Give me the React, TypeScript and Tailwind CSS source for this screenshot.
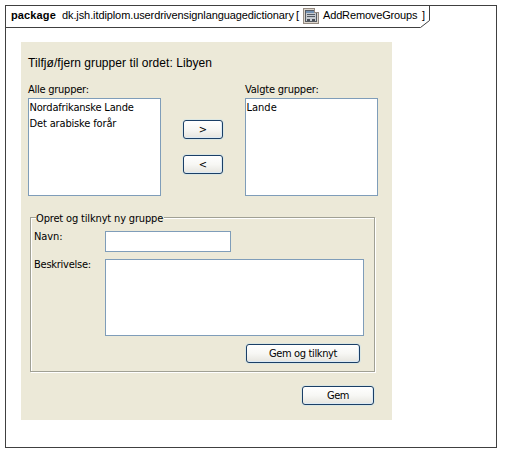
import type { ReactNode } from "react";

function XpButton({ className, children }: { className: string; children: ReactNode }) {
  return (
    <button
      type="button"
      className={`flex h-[19px] items-center justify-center rounded-[3px] border border-[#1b3f66] bg-linear-to-b from-white via-[#f7f7f4] to-[#e6e5df] leading-none shadow-[0_0_0_1px_#dbe6e2,inset_-1px_-1px_0_#dceaf5] ${className}`}
    >
      {children}
    </button>
  );
}

function FormIcon() {
  return (
    <svg width="16" height="16" viewBox="0 0 16 16" shapeRendering="crispEdges" className="block shrink-0">
      <path d="M0 0h12v1h1v1h1v1h1v1h1v12H0z" fill="#958b82" />
      <path d="M1 1h10v4h4v10H1z" fill="#ddd6cc" />
      <path d="M12 1h1v1h1v1h1v1h-3z" fill="#fff" />
      <path d="M2 2h9v3h3v9H2z" fill="#555b63" />
      <path d="M3 3h8v2H3z" fill="#7391b3" />
      <path d="M3 5h10v8H3z" fill="#c6cbd0" />
      <path d="M4 6h8v1H4zM4 8h8v1H4z" fill="#555b63" />
      <path d="M4 11h3v2H4zM9 11h3v2H9z" fill="#4a5058" />
    </svg>
  );
}

export default function App() {
  return (
    <div className="h-[462px] w-[511px] bg-white pt-[5px] pl-[5px] text-black">
      <div className="h-[443px] w-[492px] border border-[#404040]">
        <header className="relative -mt-px -ml-px h-[23px] w-[425px]">
          <svg width="425" height="23" className="absolute inset-0">
            <path d="M0 .5H424.5V15.5L415.5 22.5H0" fill="none" stroke="#404040" />
          </svg>
          <div className="relative flex h-[22px] items-center pl-[6px] font-['Liberation_Sans',Arial,sans-serif] text-[11px] leading-[13px] whitespace-pre">
            <span className="-mt-[2px] w-[51px] font-bold tracking-[0.12px]">package</span>
            <span className="-mt-[2px] w-[234px] tracking-[-0.1px]">dk.jsh.itdiplom.userdrivensignlanguagedictionary</span>
            <span className="-mt-[2px] w-[7px]">[</span>
            <FormIcon />
            <span className="-mt-[2px] ml-[4px] w-[99px] tracking-[-0.15px]">AddRemoveGroups</span>
            <span className="-mt-[2px]">]</span>
          </div>
        </header>

        <main className="mt-[14px] ml-[15px] h-[378px] w-[371px] bg-[#ece9d8] pt-[13px] pl-[7px] font-['DejaVu_Sans_Condensed','DejaVu_Sans',Tahoma,sans-serif] text-[11px] leading-[13px] whitespace-nowrap">
          <h1 className="h-4 font-['Liberation_Sans',Arial,sans-serif] text-[12px] leading-4 tracking-[0.06px]">
            Tilfjø/fjern grupper til ordet: Libyen
          </h1>
          <section className="mt-[12px] flex">
            <div className="w-[133px]">
              <div className="h-[15px] tracking-[-0.25px]">Alle grupper:</div>
              <ul className="h-[98px] border border-[#7f9db9] bg-white pt-px pl-[0.5px] leading-4">
                <li className="tracking-[-0.18px]">Nordafrikanske Lande</li>
                <li className="tracking-[-0.15px]">Det arabiske forår</li>
              </ul>
            </div>
            <div className="mt-[37px] ml-[22px] flex flex-col gap-4">
              <XpButton className="w-10">&gt;</XpButton>
              <XpButton className="w-10">&lt;</XpButton>
            </div>
            <div className="ml-[22px] w-[133px]">
              <div className="h-[15px] tracking-[-0.2px]">Valgte grupper:</div>
              <ul className="h-[98px] border border-[#7f9db9] bg-white pt-px pl-[0.5px] leading-4">
                <li>Lande</li>
              </ul>
            </div>
          </section>

          <section className="mt-[21px] ml-[2px] h-[155px] w-[345px] border border-[#a0a094] shadow-[1px_1px_0_#fff,inset_1px_1px_0_#fff]">
            <div className="-mt-[6px] ml-[5px] h-[13px] w-[128px] bg-[#ece9d8] tracking-[-0.16px]">
              Opret og tilknyt ny gruppe
            </div>
            <div className="mt-[6px] ml-[3px] flex">
              <label className="-mt-px w-[71px] tracking-[-0.1px]">Navn:</label>
              <input className="h-[21px] w-[126px] border border-[#7f9db9] bg-white" />
            </div>
            <div className="mt-[7px] ml-[3px] flex">
              <label className="-mt-px w-[71px] tracking-[-0.25px]">Beskrivelse:</label>
              <textarea className="block h-[77px] w-[259px] resize-none border border-[#7f9db9] bg-white" />
            </div>
            <XpButton className="mt-[8px] ml-[215px] w-[114px] tracking-[-0.35px]">Gem og tilknyt</XpButton>
          </section>
          <XpButton className="mt-[14px] ml-[274px] w-[72px] tracking-[-0.5px]">Gem</XpButton>
        </main>
      </div>
    </div>
  );
}
